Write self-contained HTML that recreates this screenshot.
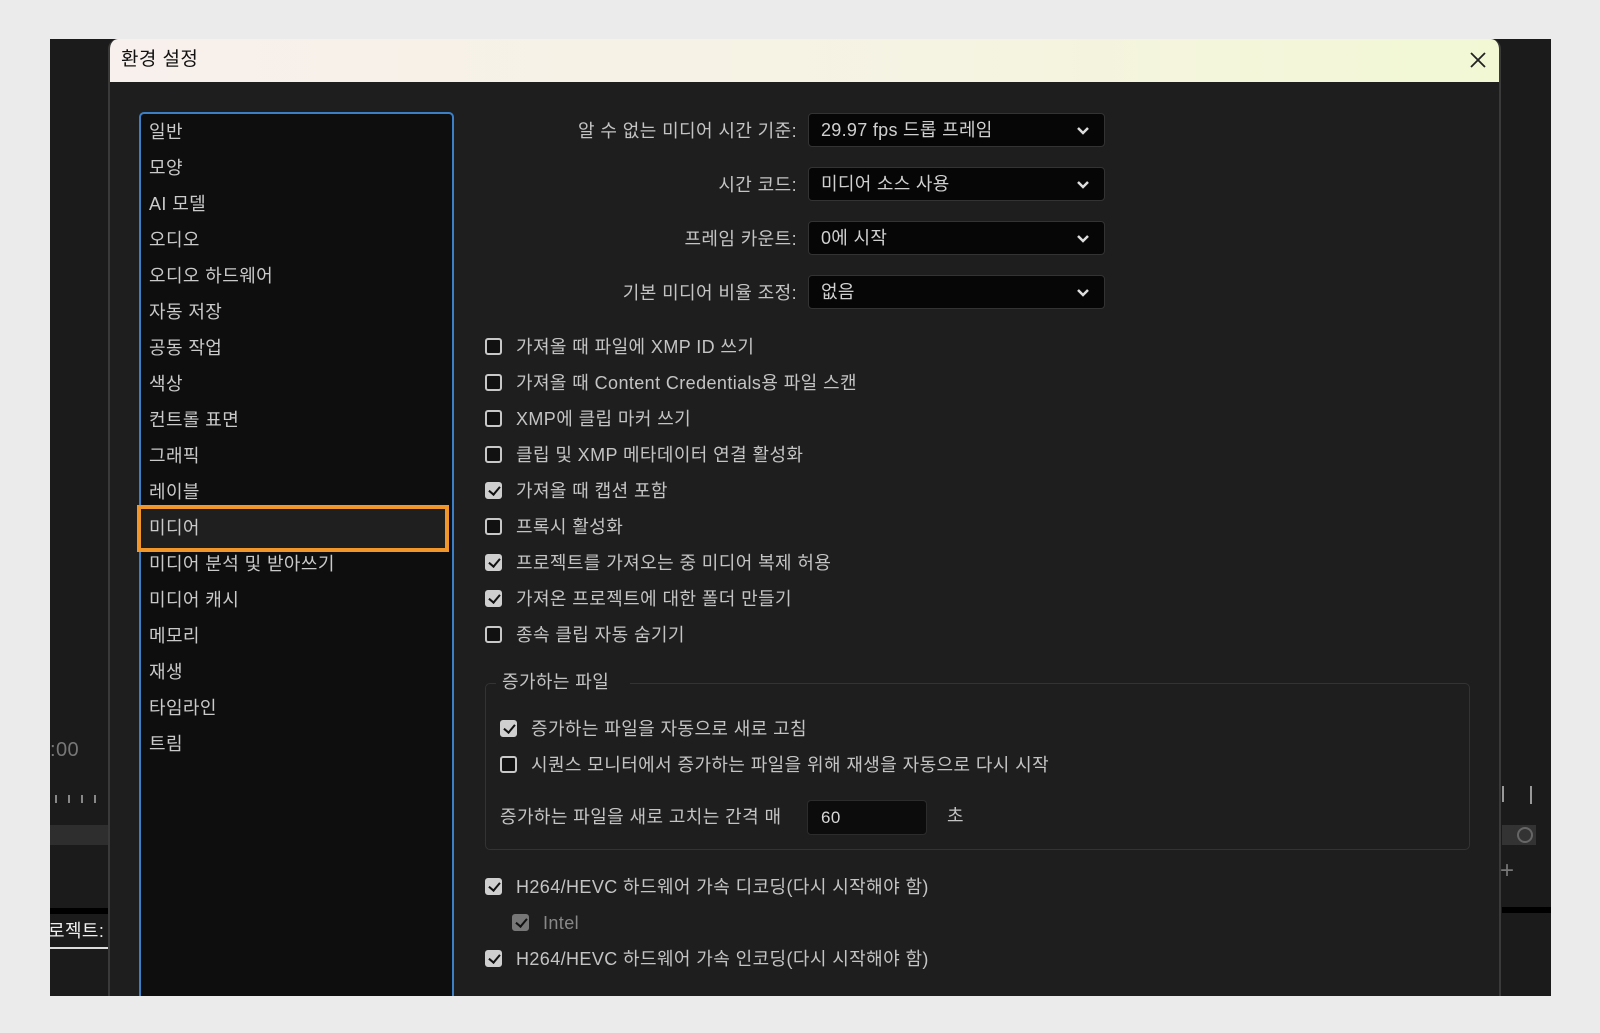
<!DOCTYPE html>
<html><head><meta charset="utf-8"><style>
*{margin:0;padding:0;box-sizing:border-box}
body{width:1600px;height:1033px;background:#ebebeb;position:relative;overflow:hidden;font-family:"Liberation Sans","Noto Sans CJK KR",sans-serif;}
.a{position:absolute}
.t{position:absolute;font-size:18px;color:#c4c4c4;white-space:nowrap;line-height:22px;letter-spacing:0.4px}
.cb{position:absolute;width:17px;height:17px;border:2.5px solid #c8c8c8;border-radius:3px;background:#111}
.cb.on{background:#cfcfcf;border-color:#cfcfcf}
.cb.on::after{content:"";position:absolute;left:4px;top:0px;width:5px;height:9px;border:solid #111;border-width:0 2.5px 2.5px 0;transform:rotate(40deg)}
.dd{position:absolute;left:808px;width:297px;height:34px;background:#060606;border:1px solid #333;border-radius:4px}
.dd span{position:absolute;left:12px;top:2px;font-size:18px;color:#d0d0d0;white-space:nowrap;letter-spacing:0.3px}
.dd svg{position:absolute;right:14px;top:12px}
.lab{position:absolute;right:803px;font-size:18px;color:#c4c4c4;white-space:nowrap;letter-spacing:0.4px}
</style></head><body>
<div class="a" style="left:50px;top:39px;width:1501px;height:957px;background:#1b1b1b"></div>
<div class="t" style="left:50px;top:739px;color:#777;font-size:20px">:00</div>
<div class="a" style="left:55px;top:795px;width:50px;height:8px;background:repeating-linear-gradient(90deg,#888 0 2px,transparent 2px 13px)"></div>
<div class="a" style="left:50px;top:825px;width:58px;height:20px;background:#2e2e2e"></div>
<div class="a" style="left:50px;top:908px;width:58px;height:6px;background:#000"></div>
<div class="t" style="left:48px;top:920px;color:#eee">로젝트:</div>
<div class="a" style="left:50px;top:947px;width:58px;height:2px;background:#ddd"></div>
<div class="a" style="left:1502px;top:786px;width:2px;height:16px;background:#999"></div>
<div class="a" style="left:1530px;top:786px;width:2px;height:18px;background:#999"></div>
<div class="a" style="left:1502px;top:825px;width:34px;height:20px;background:#333"></div>
<div class="a" style="left:1517px;top:827px;width:16px;height:16px;border:2px solid #666;border-radius:50%"></div>
<div class="t" style="left:1500px;top:860px;color:#777;font-size:24px">+</div>
<div class="a" style="left:1502px;top:907px;width:49px;height:6px;background:#000"></div>
<!-- dialog -->
<div class="a" style="left:108px;top:39px;width:1393px;height:957px;background:#1e1e1e;border-left:2px solid #3a3a3a;border-right:2px solid #3a3a3a;border-radius:10px 10px 0 0;overflow:hidden">
<div class="a" style="left:0;top:0;width:100%;height:43px;background:linear-gradient(90deg,#f8f0ec,#f5f3e2 60%,#f2f8d4)"></div>
<div class="t" style="left:11px;top:10px;color:#111;font-size:19px">환경 설정</div>
<svg class="a" style="left:1359px;top:12px" width="18" height="18"><path d="M2 2L16 16M16 2L2 16" stroke="#222" stroke-width="1.8"/></svg>
</div>
<div class="a" style="left:139px;top:112px;width:315px;height:890px;background:#0e0e0e;border:2px solid #3d7fc6;border-radius:5px"></div>
<div class="a" style="left:137px;top:505px;width:312px;height:47px;border:4px solid #f0962a;background:#1f1f1f"></div>
<div class="t" style="left:149px;top:114px;line-height:36px;color:#cacaca">일반<br>모양<br>AI 모델<br>오디오<br>오디오 하드웨어<br>자동 저장<br>공동 작업<br>색상<br>컨트롤 표면<br>그래픽<br>레이블<br>미디어<br>미디어 분석 및 받아쓰기<br>미디어 캐시<br>메모리<br>재생<br>타임라인<br>트림</div>
<!-- dropdowns -->
<div class="lab" style="top:117px">알 수 없는 미디어 시간 기준:</div>
<div class="lab" style="top:171px">시간 코드:</div>
<div class="lab" style="top:225px">프레임 카운트:</div>
<div class="lab" style="top:279px">기본 미디어 비율 조정:</div>
<div class="dd" style="top:113px"><span>29.97 fps 드롭 프레임</span><svg width="14" height="10"><path d="M2 2L7 7L12 2" stroke="#ddd" stroke-width="2.5" fill="none"/></svg></div>
<div class="dd" style="top:167px"><span>미디어 소스 사용</span><svg width="14" height="10"><path d="M2 2L7 7L12 2" stroke="#ddd" stroke-width="2.5" fill="none"/></svg></div>
<div class="dd" style="top:221px"><span>0에 시작</span><svg width="14" height="10"><path d="M2 2L7 7L12 2" stroke="#ddd" stroke-width="2.5" fill="none"/></svg></div>
<div class="dd" style="top:275px"><span>없음</span><svg width="14" height="10"><path d="M2 2L7 7L12 2" stroke="#ddd" stroke-width="2.5" fill="none"/></svg></div>
<!-- checkboxes -->
<div class="cb" style="left:485px;top:338px"></div><div class="t" style="left:516px;top:336px">가져올 때 파일에 XMP ID 쓰기</div>
<div class="cb" style="left:485px;top:374px"></div><div class="t" style="left:516px;top:372px">가져올 때 Content Credentials용 파일 스캔</div>
<div class="cb" style="left:485px;top:410px"></div><div class="t" style="left:516px;top:408px">XMP에 클립 마커 쓰기</div>
<div class="cb" style="left:485px;top:446px"></div><div class="t" style="left:516px;top:444px">클립 및 XMP 메타데이터 연결 활성화</div>
<div class="cb on" style="left:485px;top:482px"></div><div class="t" style="left:516px;top:480px">가져올 때 캡션 포함</div>
<div class="cb" style="left:485px;top:518px"></div><div class="t" style="left:516px;top:516px">프록시 활성화</div>
<div class="cb on" style="left:485px;top:554px"></div><div class="t" style="left:516px;top:552px">프로젝트를 가져오는 중 미디어 복제 허용</div>
<div class="cb on" style="left:485px;top:590px"></div><div class="t" style="left:516px;top:588px">가져온 프로젝트에 대한 폴더 만들기</div>
<div class="cb" style="left:485px;top:626px"></div><div class="t" style="left:516px;top:624px">종속 클립 자동 숨기기</div>
<!-- group -->
<div class="a" style="left:485px;top:683px;width:985px;height:167px;border:1.5px solid #333;border-radius:5px"></div>
<div class="a" style="left:496px;top:672px;width:134px;height:22px;background:#1e1e1e"></div>
<div class="t" style="left:502px;top:671px">증가하는 파일</div>
<div class="cb on" style="left:500px;top:720px"></div><div class="t" style="left:531px;top:718px">증가하는 파일을 자동으로 새로 고침</div>
<div class="cb" style="left:500px;top:756px"></div><div class="t" style="left:531px;top:754px">시퀀스 모니터에서 증가하는 파일을 위해 재생을 자동으로 다시 시작</div>
<div class="t" style="left:500px;top:806px">증가하는 파일을 새로 고치는 간격 매</div>
<div class="a" style="left:807px;top:800px;width:120px;height:35px;background:#0c0c0c;border:1px solid #2c2c2c;border-radius:4px"></div>
<div class="t" style="left:821px;top:807px;color:#d8d8d8;font-size:17px">60</div>
<div class="t" style="left:947px;top:805px">초</div>
<div class="cb on" style="left:485px;top:878px"></div><div class="t" style="left:516px;top:876px">H264/HEVC 하드웨어 가속 디코딩(다시 시작해야 함)</div>
<div class="cb on" style="left:512px;top:914px;background:#777;border-color:#777"></div><div class="t" style="left:543px;top:912px;color:#888">Intel</div>
<div class="cb on" style="left:485px;top:950px"></div><div class="t" style="left:516px;top:948px">H264/HEVC 하드웨어 가속 인코딩(다시 시작해야 함)</div>
<div class="a" style="left:0;top:996px;width:1600px;height:37px;background:#ebebeb"></div>
</body></html>
